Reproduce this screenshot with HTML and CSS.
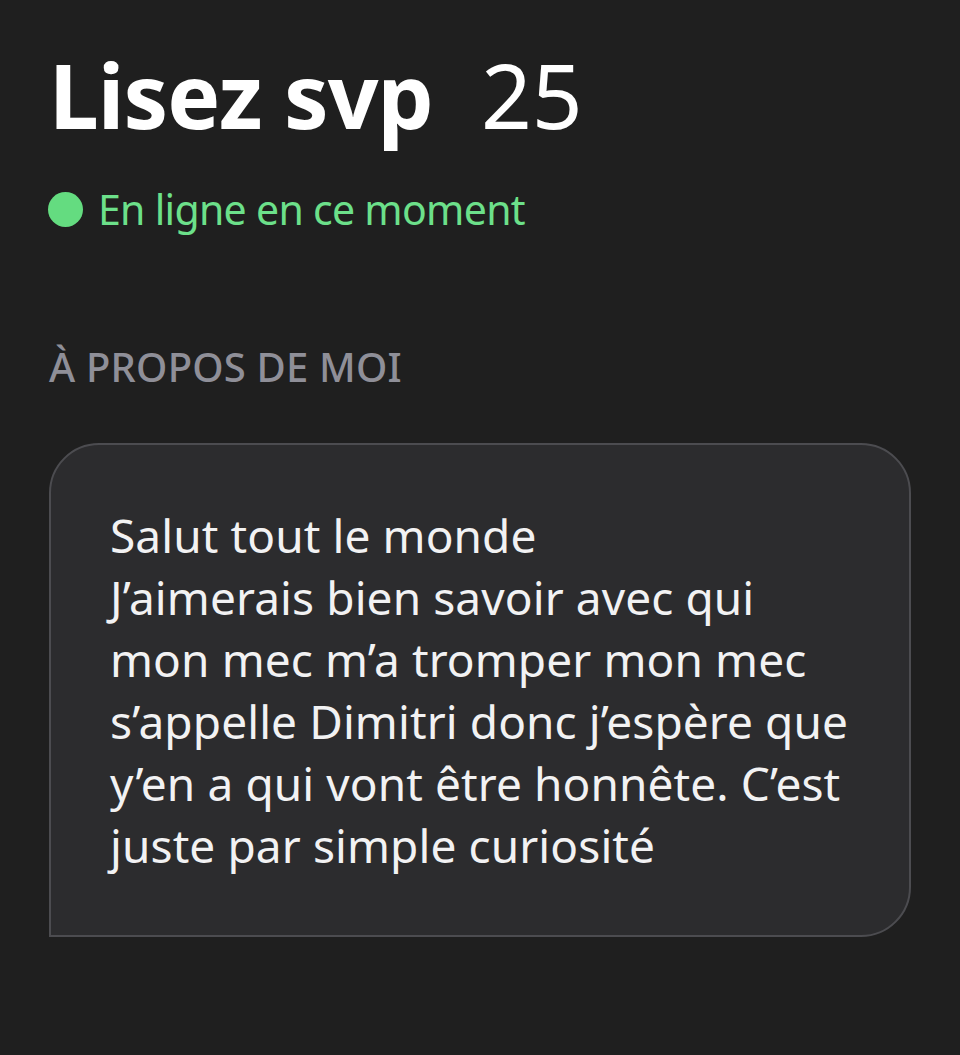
FILE: index.html
```html
<!DOCTYPE html>
<html lang="fr">
<head>
<meta charset="utf-8">
<title>Profil</title>
<link rel="stylesheet" href="styles.css">
</head>
<body>
<main class="profile">
  <h1 class="name"><span class="name-text">Lisez svp</span><span class="age">25</span></h1>
  <div class="status"><span class="dot"></span><span class="status-text">En ligne en ce moment</span></div>
  <h2 class="section-label">À PROPOS DE MOI</h2>
  <div class="about-card">
    <p class="about-text">Salut tout le monde<br>J’aimerais bien savoir avec qui<br>mon mec m’a tromper mon mec<br>s’appelle Dimitri donc j’espère que<br>y’en a qui vont être honnête. C’est<br>juste par simple curiosité</p>
  </div>
</main>
</body>
</html>
```

FILE: styles.css
```css
html, body {
  margin: 0;
  padding: 0;
  background: #1f1f1f;
  height: 100%;
}
body {
  font-family: "Noto Sans", "Open Sans", sans-serif;
  color: #f4f4f5;
}
.profile {
  display: flex;
  flex-direction: column;
  padding: 0 49px;
}
.name {
  margin: 45px 0 0;
  font-size: 89px;
  line-height: 100px;
  font-weight: 700;
  letter-spacing: -0.9px;
  color: #ffffff;
  display: flex;
  gap: 48px;
}
.age {
  font-weight: 400;
  letter-spacing: 0;
}
.status {
  margin-top: 39px;
  display: flex;
  align-items: center;
  gap: 15px;
  height: 50px;
}
.dot {
  width: 35px;
  height: 35px;
  border-radius: 50%;
  background: #64dc80;
  flex: none;
  margin-left: -1px;
}
.status-text {
  font-size: 41px;
  line-height: 50px;
  letter-spacing: -0.7px;
  color: #6ce08a;
}
.section-label {
  margin: 108px 0 0;
  font-size: 40px;
  line-height: 50px;
  font-weight: 500;
  letter-spacing: 0.2px;
  color: #8f8f98;
}
.about-card {
  margin-top: 51px;
  background: #2c2c2e;
  border: 2px solid #4c4c50;
  border-radius: 50px 50px 50px 0;
  padding: 59px 59px 59px;
}
.about-text {
  margin: 0;
  font-size: 46px;
  line-height: 62px;
  letter-spacing: 0.1px;
  color: #f2f2f3;
  white-space: nowrap;
}
```
